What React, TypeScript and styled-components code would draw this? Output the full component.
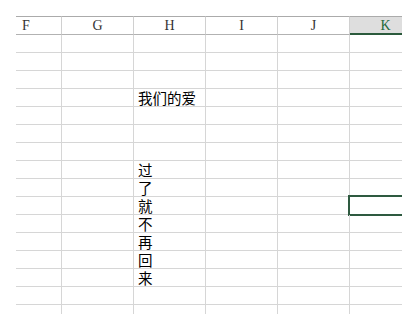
import React from 'react';
import styled, { createGlobalStyle } from 'styled-components';

const GlobalStyle = createGlobalStyle`
  html, body {
    margin: 0;
    padding: 0;
    background: #ffffff;
    overflow: hidden;
  }
  body {
    font-family: 'Noto Sans CJK SC', sans-serif;
  }
`;

const Sheet = styled.div`
  width: 402px;
  height: 314px;
  overflow: hidden;
  padding: 16px 0 0 16px;
  box-sizing: border-box;
`;

const Grid = styled.div`
  display: grid;
  grid-template-columns: 46px repeat(5, 72px);
  width: 406px;
`;

const HeaderCell = styled.div<{ $active?: boolean; $left?: boolean }>`
  height: 19px;
  box-sizing: border-box;
  border-top: 1px solid #ababab;
  border-bottom: ${(p) => (p.$active ? '2px solid #2b5a3c' : '1px solid #b2b2b2')};
  border-right: 1px solid #d0d0d0;
  background: ${(p) => (p.$active ? '#dedede' : '#ffffff')};
  color: ${(p) => (p.$active ? '#1f6a3a' : '#333333')};
  font-family: 'Liberation Serif', 'DejaVu Serif', serif;
  font-size: 14px;
  line-height: 17px;
  text-align: ${(p) => (p.$left ? 'left' : 'center')};
  padding-left: ${(p) => (p.$left ? '6px' : '0')};
`;

const Cell = styled.div`
  position: relative;
  height: 18px;
  box-sizing: border-box;
  border-bottom: 1px solid #d6d6d6;
  border-right: 1px solid #d6d6d6;
  padding-left: 4px;
  font-size: 14.5px;
  line-height: 17px;
  color: #000000;
  white-space: nowrap;
`;

const Selection = styled.div`
  position: absolute;
  left: -2px;
  top: -2px;
  right: -3px;
  bottom: -2px;
  border: 2px solid #2e5a40;
`;

const columns = ['F', 'G', 'H', 'I', 'J', 'K'];

const cellText: Record<string, string> = {
  '4-H': '我们的爱',
  '8-H': '过',
  '9-H': '了',
  '10-H': '就',
  '11-H': '不',
  '12-H': '再',
  '13-H': '回',
  '14-H': '来',
};

const rows = Array.from({ length: 16 }, (_, i) => i + 1);

const App: React.FC = () => {
  return (
    <>
      <GlobalStyle />
      <Sheet>
        <Grid>
          {columns.map((c) => (
            <HeaderCell key={c} $active={c === 'K'} $left={c === 'F'}>
              {c}
            </HeaderCell>
          ))}
          {rows.map((r) =>
            columns.map((c) => (
              <Cell key={`${r}-${c}`}>
                {cellText[`${r}-${c}`]}
                {r === 10 && c === 'K' && <Selection />}
              </Cell>
            ))
          )}
        </Grid>
      </Sheet>
    </>
  );
};

export default App;
